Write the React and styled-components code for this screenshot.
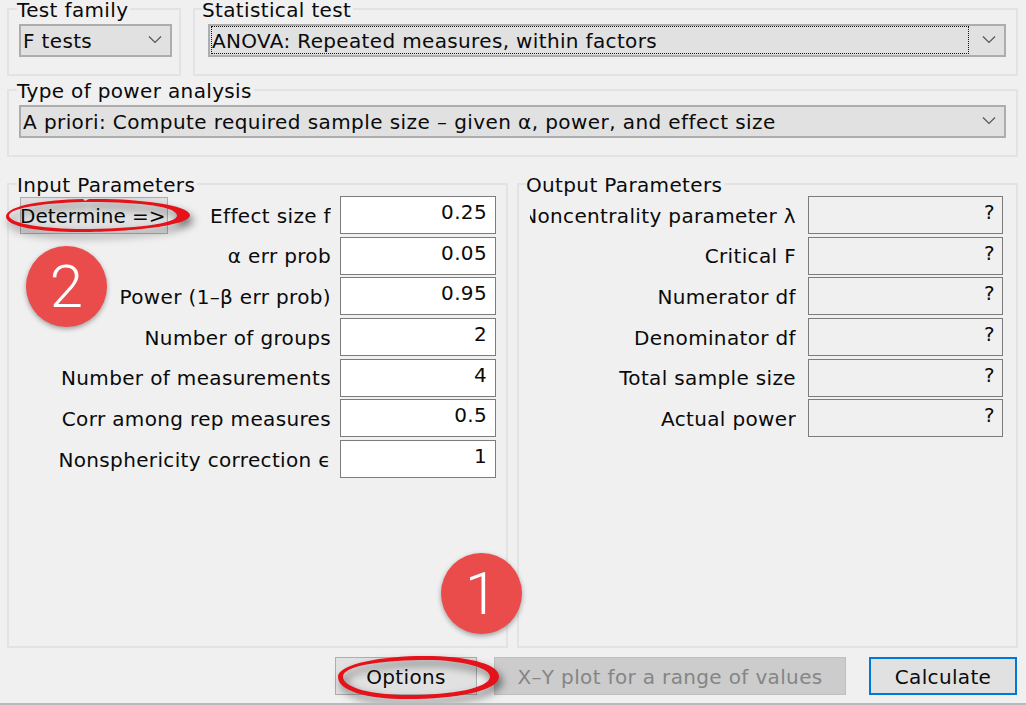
import React from "react";
import styled, { createGlobalStyle } from "styled-components";

const GlobalStyle = createGlobalStyle`
  html, body {
    margin: 0;
    padding: 0;
    background: #f0f0f0;
  }
`;

const Page = styled.div`
  position: relative;
  box-sizing: border-box;
  width: 1026px;
  height: 705px;
  padding: 0 8px 0 7px;
  display: flex;
  flex-direction: column;
  overflow: hidden;
  background: #f0f0f0;
  border-bottom: 2px solid #b9b9b9;
  font-family: "DejaVu Sans", sans-serif;
  font-size: 20px;
  letter-spacing: 0.35px;
  color: #0a0a0a;
`;

const TopRow = styled.div`
  display: flex;
  gap: 12px;
`;

const Group = styled.fieldset`
  box-sizing: border-box;
  min-width: 0;
  margin: ${(p) => p.$mt || 0}px 0 0;
  padding: ${(p) => p.$pt || 6}px ${(p) => p.$pr}px 0 ${(p) => p.$pl}px;
  border: 2px solid #e3e3e3;
  height: ${(p) => p.$h}px;
  width: ${(p) => (p.$w ? `${p.$w}px` : "auto")};
  flex: ${(p) => (p.$grow ? "1" : "none")};
`;

const Title = styled.legend`
  height: 18px;
  line-height: 20px;
  padding: 0 2px 0 0;
  margin-left: ${(p) => (p.$ml ?? 8) - (p.$pl ?? 0)}px;
  white-space: nowrap;
`;

const Select = styled.div`
  box-sizing: border-box;
  height: 33px;
  display: flex;
  align-items: center;
  background: #e1e1e1;
  border: 2px solid #adadad;
  padding: 0 8px 2px 2px;
`;

const SelectText = styled.div`
  flex: 1;
  height: 26px;
  line-height: 28px;
  margin-right: 14px;
  white-space: nowrap;
  letter-spacing: ${(p) => p.$ls || 0.35}px;
  outline: ${(p) => (p.$focused ? "1px dotted #111" : "none")};
`;

const Chevron = styled.svg`
  width: 14px;
  height: 9px;
  flex: none;
  fill: none;
  stroke: #555;
  stroke-width: 1.2;
`;

const Columns = styled.div`
  display: flex;
  gap: 9px;
`;

const Rows = styled.div`
  display: grid;
  grid-template-columns: minmax(0, 1fr);
  grid-auto-rows: 38px;
  row-gap: 2.7px;
`;

const Row = styled.div`
  display: flex;
  align-items: center;
  gap: ${(p) => p.$gap}px;
`;

const Label = styled.div`
  flex: 1;
  min-width: 0;
  display: flex;
  justify-content: flex-end;
  overflow: hidden;
  white-space: nowrap;
  padding-top: 1px;
`;

const Field = styled.div`
  box-sizing: border-box;
  flex: none;
  width: ${(p) => p.$w}px;
  height: 38px;
  line-height: 31px;
  padding-right: ${(p) => p.$pr}px;
  text-align: right;
  background: ${(p) => (p.$readOnly ? "#f0f0f0" : "#ffffff")};
  border: 1px solid #7c7c7c;
`;

const DetermineButton = styled.div`
  box-sizing: border-box;
  flex: none;
  width: 148px;
  height: 37px;
  line-height: 36px;
  text-indent: -1px;
  letter-spacing: 0;
  background: #e1e1e1;
  border: 1px solid #adadad;
  white-space: nowrap;
`;

const Footer = styled.div`
  display: flex;
  margin: 9px 0 0 328px;
`;

const Button = styled.div`
  box-sizing: border-box;
  height: 38px;
  text-align: center;
  width: ${(p) => p.$w}px;
  margin-left: ${(p) => p.$ml || 0}px;
  background: ${(p) => (p.$disabled ? "#cccccc" : "#e1e1e1")};
  color: ${(p) => (p.$disabled ? "#858585" : "inherit")};
  border: ${(p) =>
    p.$primary
      ? "2px solid #0078d7"
      : p.$disabled
      ? "1px solid #bfbfbf"
      : "1px solid #adadad"};
  line-height: ${(p) => (p.$primary ? 37 : 39)}px;
`;

const Badge = styled.div`
  position: absolute;
  left: ${(p) => p.$x}px;
  top: ${(p) => p.$y}px;
  width: 81px;
  height: 81px;
  border-radius: 50%;
  background: #ea4b4b;
  box-shadow: 0 2px 5px rgba(0, 0, 0, 0.35);
  color: #fff;
  font-family: Roboto, "Liberation Sans", sans-serif;
  font-weight: 300;
  font-size: 60px;
  letter-spacing: 0;
  line-height: 81px;
  text-align: center;
`;

const Scribble = styled.svg`
  position: absolute;
  left: ${(p) => p.$x}px;
  top: ${(p) => p.$y}px;
  overflow: visible;
  filter: drop-shadow(3px 5px 4px rgba(0, 0, 0, 0.55));
`;

const down = (
  <Chevron viewBox="0 0 14 9">
    <path d="M1 1.5 L7 7.5 L13 1.5" />
  </Chevron>
);

const inputs = [
  ["Effect size f", "0.25"],
  ["α err prob", "0.05"],
  ["Power (1–β err prob)", "0.95"],
  ["Number of groups", "2"],
  ["Number of measurements", "4"],
  ["Corr among rep measures", "0.5"],
  ["Nonsphericity correction ϵ", "1"],
];

const outputs = [
  "Noncentrality parameter λ",
  "Critical F",
  "Numerator df",
  "Denominator df",
  "Total sample size",
  "Actual power",
];

export default function App() {
  return (
    <>
      <GlobalStyle />
      <Page>
        <TopRow>
          <Group $h={76} $w={174} $pl={10} $pr={7}>
            <Title $pl={10}>Test family</Title>
            <Select>
              <SelectText>F tests</SelectText>
              {down}
            </Select>
          </Group>
          <Group $h={76} $grow $pl={13} $pr={10}>
            <Title $pl={13} $ml={7}>Statistical test</Title>
            <Select>
              <SelectText $focused>ANOVA: Repeated measures, within factors</SelectText>
              {down}
            </Select>
          </Group>
        </TopRow>
        <Group $h={76} $mt={5} $pl={10} $pr={10}>
          <Title $pl={10}>Type of power analysis</Title>
          <Select>
            <SelectText $ls={0.42}>A priori: Compute required sample size – given α, power, and effect size</SelectText>
            {down}
          </Select>
        </Group>
        <Columns>
          <Group $h={473} $w={501} $mt={18} $pt={3} $pl={11} $pr={10}>
            <Title $pl={11}>Input Parameters</Title>
            <Rows>
              {inputs.map(([label, value], i) => (
                <Row key={label} $gap={9}>
                  {i === 0 && <DetermineButton>Determine =&gt;</DetermineButton>}
                  <Label>{label}</Label>
                  <Field $w={156} $pr={8}>{value}</Field>
                </Row>
              ))}
            </Rows>
          </Group>
          <Group $h={473} $grow $mt={18} $pt={3} $pl={11} $pr={13}>
            <Title $pl={11} $ml={7}>Output Parameters</Title>
            <Rows>
              {outputs.map((label) => (
                <Row key={label} $gap={12}>
                  <Label>{label}</Label>
                  <Field $w={195} $pr={7} $readOnly>?</Field>
                </Row>
              ))}
            </Rows>
          </Group>
        </Columns>
        <Footer>
          <Button $w={142}>Options</Button>
          <Button $w={352} $ml={17} $disabled>X–Y plot for a range of values</Button>
          <Button $w={148} $ml={23} $primary>Calculate</Button>
        </Footer>

        <Scribble $x={5} $y={198} width="186" height="36" viewBox="0 0 186 36">
          <path
            fill="#e6121a"
            fillRule="evenodd"
            d="M1 18 C3 7 40 2 78 1 L80 3 L84 1 C125 0 184 6 185 17 C186 27 130 34 75 34 C35 34 0 29 1 18 Z M4 18 C6 26 40 31 78 31 C125 31 174 26 172 17 C170 9 140 4 84 4 C50 4 3 9 4 18 Z"
          />
        </Scribble>
        <Scribble $x={337} $y={655} width="163" height="44" viewBox="0 0 163 44">
          <path
            fill="#e6121a"
            fillRule="evenodd"
            d="M1 21 C3 8 50 0 95 1 C135 2 163 10 162 22 C161 36 120 44 70 44 C30 44 0 36 1 21 Z M6 22 C7 33 35 40 72 40 C115 40 152 33 153 22 C154 13 125 5 90 5 C50 5 5 10 6 22 Z"
          />
        </Scribble>
        <Badge $x={26} $y={246}>2</Badge>
        <Badge $x={441} $y={553}>1</Badge>
      </Page>
    </>
  );
}
